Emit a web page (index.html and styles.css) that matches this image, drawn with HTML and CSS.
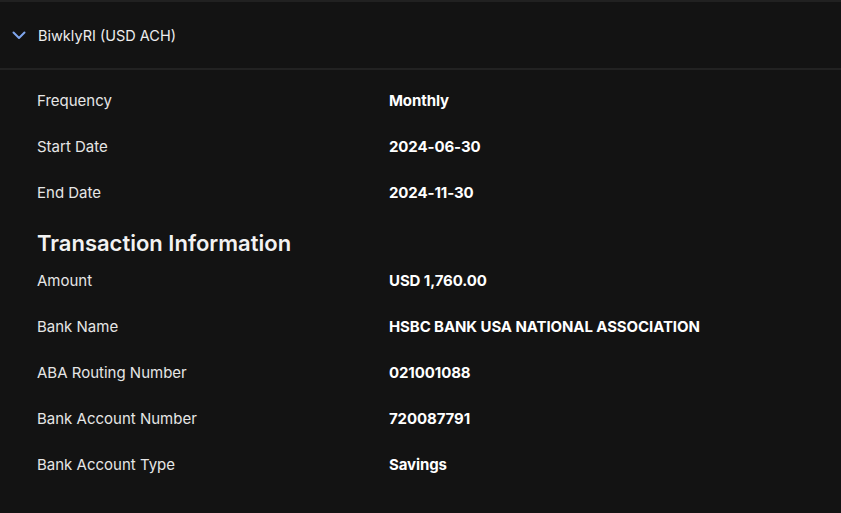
FILE: index.html
```html
<!DOCTYPE html>
<html>
<head>
<meta charset="utf-8">
<link rel="stylesheet" href="styles.css">
</head>
<body>
<div class="panel">
  <div class="header">
    <svg class="chev" width="14" height="9" viewBox="0 0 14 9"><path d="M1.5 1.5 L7 7 L12.5 1.5" fill="none" stroke="#7fa6ee" stroke-width="2" stroke-linecap="round" stroke-linejoin="round"/></svg>
    <span class="title">BiwklyRI (USD ACH)</span>
  </div>
  <div class="body">
    <div class="row"><span class="label">Frequency</span><span class="value">Monthly</span></div>
    <div class="row"><span class="label">Start Date</span><span class="value">2024-06-30</span></div>
    <div class="row"><span class="label">End Date</span><span class="value">2024-11-30</span></div>
    <h2 class="section">Transaction Information</h2>
    <div class="row"><span class="label">Amount</span><span class="value">USD 1,760.00</span></div>
    <div class="row"><span class="label">Bank Name</span><span class="value">HSBC BANK USA NATIONAL ASSOCIATION</span></div>
    <div class="row"><span class="label">ABA Routing Number</span><span class="value">021001088</span></div>
    <div class="row"><span class="label">Bank Account Number</span><span class="value">720087791</span></div>
    <div class="row"><span class="label">Bank Account Type</span><span class="value">Savings</span></div>
  </div>
</div>
</body>
</html>
```
FILE: styles.css
```css
html, body {
  margin: 0;
  padding: 0;
  background: #131313;
}
body {
  font-family: Inter, "Noto Sans", sans-serif;
  color: #e8e8e8;
  width: 841px;
  height: 513px;
  overflow: hidden;
}
.panel {
  border-top: 2px solid #212121;
}
.header {
  height: 66px;
  display: flex;
  align-items: center;
  padding-left: 12px;
  border-bottom: 2px solid #222222;
}
.chev {
  margin-right: 12px;
  margin-top: 0;
}
.title {
  font-size: 14.5px;
  color: #ededed;
}
.body {
  padding-top: 7px;
  padding-left: 37px;
}
.row {
  display: grid;
  grid-template-columns: 352px 1fr;
  height: 46px;
  align-items: center;
  font-size: 15px;
}
.label {
  color: #e6e6e6;
}
.value {
  color: #ffffff;
  font-weight: 700;
  letter-spacing: -0.1px;
}
.section {
  margin: 13px 0 0 0;
  height: 29px;
  line-height: 31px;
  font-size: 22px;
  font-weight: 600;
  color: #f2f2f2;
}
```
